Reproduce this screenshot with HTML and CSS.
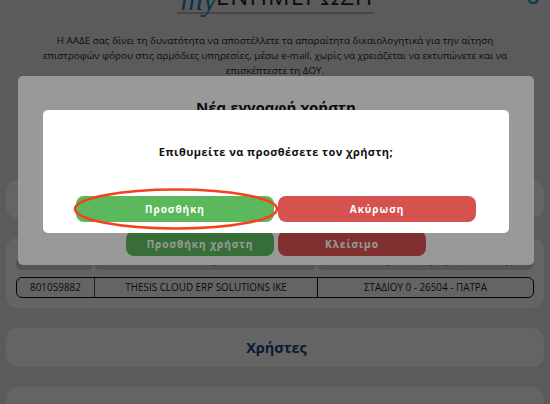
FILE: index.html
```html
<!DOCTYPE html>
<html lang="el">
<head>
<meta charset="utf-8">
<title>myΕΝΗΜΕΡΩΣΗ</title>
<link rel="stylesheet" href="styles.css">
</head>
<body>
<div class="page">
  <header class="logo"><span class="my">my</span><span class="word">ΕΝΗΜΕΡΩΣΗ</span></header>
  <svg class="corner" width="12" height="6" viewBox="0 0 12 6"><path d="M1 0C2 4 8 4 10 0" fill="none" stroke="#1b87c0" stroke-width="2"/></svg>
  <p class="intro">Η ΑΑΔΕ σας δίνει τη δυνατότητα να αποστέλλετε τα απαραίτητα δικαιολογητικά για την αίτηση επιστροφών φόρου στις αρμόδιες υπηρεσίες, μέσω e-mail, χωρίς να χρειάζεται να εκτυπώνετε και να επισκέπτεστε τη ΔΟΥ.</p>
  <section class="panel short"></section>
  <section class="panel tablepanel">
    <div class="row head"><div class="c1">ΑΦΜ</div><div class="c2">Επωνυμία</div><div class="c3">Διεύθυνση (Οδός, Αριθμός, ΤΚ, Πόλη)</div></div>
    <div class="row data"><div class="c1">801059882</div><div class="c2">THESIS CLOUD ERP SOLUTIONS IKE</div><div class="c3">ΣΤΑΔΙΟΥ 0 - 26504 - ΠΑΤΡΑ</div></div>
  </section>
  <section class="panel users"><h2>Χρήστες</h2></section>
  <section class="panel last"></section>
</div>
<div class="backdrop first"></div>
<div class="modal outer">
  <h1>Νέα εγγραφή χρήστη</h1>
  <div class="outer-actions"><button class="btn green small">Προσθήκη χρήστη</button><button class="btn red small">Κλείσιμο</button></div>
</div>
<div class="backdrop"></div>
<div class="modal inner">
  <p class="question">Επιθυμείτε να προσθέσετε τον χρήστη;</p>
  <div class="inner-actions"><button class="btn green">Προσθήκη</button><button class="btn red">Ακύρωση</button></div>
</div>
<svg class="ring" width="212" height="46" viewBox="0 0 212 46"><ellipse cx="105" cy="23" rx="101" ry="19.5" fill="none" stroke="#f4421f" stroke-width="2.6"/></svg>
</body>
</html>
```
FILE: styles.css
```css
html, body { margin: 0; height: 100%; overflow: hidden; }
body { background: #e9e9e9; font-family: "Open Sans", "Noto Sans", sans-serif; color: #222; }
.page { height: 404px; padding: 0 6px; box-sizing: border-box; display: flex; flex-direction: column; overflow: hidden; }
.logo { margin: -9px auto 0; width: 197px; height: 21px; border-bottom: 2px solid #b4b4b4; display: flex; justify-content: flex-end; align-items: flex-end; line-height: 1; position: relative; }
.my { position: absolute; left: 4px; top: -9px; font: italic 31px "Liberation Serif", serif; color: #1b87c0; }
.word { font: 400 24px "Open Sans", sans-serif; color: #222; letter-spacing: 1px; }
.corner { position: absolute; left: 528px; top: 0; }
.intro { margin: 19px 34px 0; font-size: 9.8px; line-height: 15px; text-align: center; color: #222; }
.panel { background: #fff; border-radius: 12px; flex: none; }
.short { height: 38px; margin-top: 102px; }
.tablepanel { margin-top: 20px; height: 70px; padding: 20px 10px 0; box-sizing: border-box; }
.row { display: grid; grid-template-columns: 78px 223px 1fr; font-size: 9.9px; text-align: center; }
.head > div { background: #ccd9e6; height: 13px; border-radius: 6px; margin: -1px 1px 0 0; line-height: 5px; }
.data { border: 1px solid #111; border-radius: 6px; height: 21px; line-height: 19px; box-sizing: border-box; margin-top: 7px; }
.data .c1 { border-right: 1px solid #555; }
.data .c2 { border-right: 1px solid #111; }
.users { margin-top: 20px; height: 39px; padding-left: 3px; box-sizing: border-box; display: flex; align-items: center; justify-content: center; }
.users h2 { margin: 0; font-size: 14.5px; font-weight: 700; color: #1c3f85; }
.last { margin-top: 20px; height: 60px; }
.backdrop { position: fixed; inset: 0; background: rgba(0,0,0,.4); }
.backdrop.first { background: rgba(0,0,0,.35); }
.modal { position: fixed; background: #fff; border-radius: 5px; box-sizing: border-box; }
.outer { left: 18px; top: 76px; width: 516px; height: 189px; text-align: center; }
.outer h1 { margin: 21px 0 0; font-size: 15px; font-weight: 700; color: #111; }
.outer-actions { position: absolute; left: 108px; top: 155px; display: flex; gap: 4px; }
.inner { left: 43px; top: 110px; width: 466px; height: 123px; text-align: center; }
.question { margin: 34px 0 0; font-size: 11px; font-weight: 700; letter-spacing: .45px; color: #111; }
.inner-actions { position: absolute; left: 33px; top: 86px; display: flex; gap: 4px; }
.btn { border: 0; border-radius: 8px; color: #fff; font: 700 10px "Open Sans", sans-serif; letter-spacing: 1px; width: 198px; height: 26px; padding: 0; }
.btn.small { width: 148px; height: 25px; }
.green { background: #5cb85c; }
.red { background: #d6524f; }
.ring { position: fixed; left: 71px; top: 186px; }
```
